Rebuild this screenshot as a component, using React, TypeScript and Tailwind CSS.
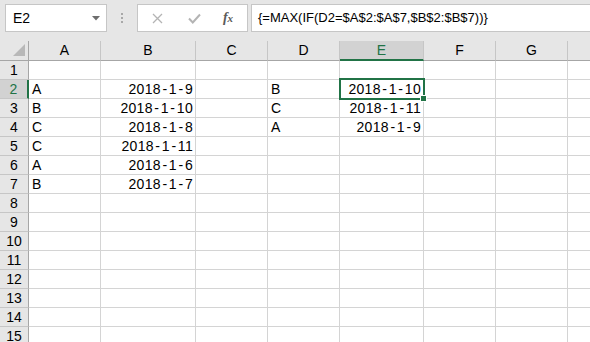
import React from "react";

const COLS = ["A", "B", "C", "D", "E", "F", "G", ""];
const gridCols = "grid w-[640px] grid-cols-[29px_72px_95px_72px_72px_84px_72px_72px_72px]";

type Cell = { t: string; r?: boolean };
const data: Record<number, Record<string, Cell>> = {
  2: { A: { t: "A" }, B: { t: "2018-1-9", r: true }, D: { t: "B" }, E: { t: "2018-1-10", r: true } },
  3: { A: { t: "B" }, B: { t: "2018-1-10", r: true }, D: { t: "C" }, E: { t: "2018-1-11", r: true } },
  4: { A: { t: "C" }, B: { t: "2018-1-8", r: true }, D: { t: "A" }, E: { t: "2018-1-9", r: true } },
  5: { A: { t: "C" }, B: { t: "2018-1-11", r: true } },
  6: { A: { t: "A" }, B: { t: "2018-1-6", r: true } },
  7: { A: { t: "B" }, B: { t: "2018-1-7", r: true } },
};

function DateText({ s }: { s: string }) {
  const parts = s.split("-");
  return (
    <span className="tracking-[0.3px]">
      {parts.map((p, i) => (
        <React.Fragment key={i}>
          {i > 0 && <span className="mx-[1.5px]">-</span>}
          {p}
        </React.Fragment>
      ))}
    </span>
  );
}

export default function App() {
  const rows = Array.from({ length: 15 }, (_, i) => i + 1);
  return (
    <div
      className="relative w-[590px] h-[342px] overflow-hidden bg-white text-black"
      style={{ fontFamily: '"Liberation Sans", Arial, sans-serif' }}
    >
      {/* Formula bar */}
      <div className="h-[41px] bg-[#e6e6e6] flex items-start pt-[4px]">
        <div className="ml-[5px] w-[102px] h-[28px] bg-white border border-[#c6c6c6] flex items-center justify-between pl-[7px] pr-[6px]">
          <span className="text-[14px]">E2</span>
          <svg width="8" height="5" viewBox="0 0 8 5">
            <polygon points="0,0 8,0 4,4.5" fill="#6e6e6e" />
          </svg>
        </div>
        <div className="w-[30px] h-[28px] flex flex-col items-center justify-center gap-[2px]">
          <span className="w-[2px] h-[2px] bg-[#a8a8a8]" />
          <span className="w-[2px] h-[2px] bg-[#a8a8a8]" />
          <span className="w-[2px] h-[2px] bg-[#a8a8a8]" />
        </div>
        <div className="w-[111px] h-[28px] bg-white border border-[#c6c6c6] flex items-center">
          <div className="w-[38px] flex justify-center">
            <svg width="11" height="11" viewBox="0 0 11 11">
              <path d="M1 1 L10 10 M10 1 L1 10" stroke="#b4b4b4" strokeWidth="1.3" />
            </svg>
          </div>
          <div className="w-[36px] flex justify-center">
            <svg width="13" height="11" viewBox="0 0 13 11">
              <path d="M1 5.5 L4.8 9.5 L12 1.5" stroke="#b4b4b4" strokeWidth="2" fill="none" />
            </svg>
          </div>
          <div className="w-[32px] flex justify-center">
            <span
              className="italic font-bold text-[14px] text-[#5a5a5a] leading-none"
              style={{ fontFamily: '"Liberation Serif", "Times New Roman", serif' }}
            >
              f<span className="text-[11px]">x</span>
            </span>
          </div>
        </div>
        <div className="ml-[3px] flex-1 h-[28px] bg-white border-y border-l border-[#c6c6c6] flex items-center pl-[6px]">
          <span className="text-[13px]">{"{=MAX(IF(D2=$A$2:$A$7,$B$2:$B$7))}"}</span>
        </div>
      </div>

      {/* Column headers */}
      <div className={`${gridCols} h-[20px]`}>
        <div className="relative bg-[#e6e6e6] border-r border-b border-[#a6a6a6]">
          <svg className="absolute left-[13px] top-[3px]" width="13" height="13" viewBox="0 0 13 13">
            <polygon points="12,0 12,12 0,12" fill="#b8b8b8" />
          </svg>
        </div>
        {COLS.map((c, i) => {
          const sel = c === "E";
          return (
            <div
              key={i}
              className={
                sel
                  ? "bg-[#d2d2d2] border-r border-[#c6c6c6] border-b-2 border-b-[#217346] text-[#217346] flex items-end justify-center text-[14px] leading-none pb-[2px]"
                  : "bg-[#e6e6e6] border-r border-[#c6c6c6] border-b border-b-[#a6a6a6] flex items-end justify-center text-[14px] leading-none pb-[3px]"
              }
            >
              {c}
            </div>
          );
        })}
      </div>

      {/* Rows */}
      {rows.map((r) => {
        const sel = r === 2;
        return (
          <div key={r} className={`${gridCols} h-[19px]`}>
            <div
              className={
                sel
                  ? "bg-[#d2d2d2] text-[#217346] border-b border-[#c6c6c6] border-r-2 border-r-[#217346] flex items-end justify-center text-[14px] leading-none pb-[2px]"
                  : "bg-[#e6e6e6] border-b border-[#c6c6c6] border-r border-r-[#a6a6a6] flex items-end justify-center text-[14px] leading-none pb-[2px]"
              }
            >
              {r}
            </div>
            {COLS.map((c, i) => {
              const cell = c ? data[r]?.[c] : undefined;
              return (
                <div
                  key={i}
                  className={`border-r border-b border-[#d4d4d4] flex items-end text-[14px] leading-none pb-[2px] overflow-hidden whitespace-nowrap ${
                    cell?.r ? "justify-end pr-[2px]" : "justify-start pl-[3px]"
                  }`}
                >
                  {cell ? cell.r ? <DateText s={cell.t} /> : cell.t : null}
                </div>
              );
            })}
          </div>
        );
      })}

      {/* Selection of E2 */}
      <div className="absolute left-[339px] top-[78px] w-[86px] h-[22px] border-2 border-[#217346] pointer-events-none" />
      <div className="absolute left-[420px] top-[95px] w-[7px] h-[7px] bg-[#217346] border border-white" />
    </div>
  );
}
